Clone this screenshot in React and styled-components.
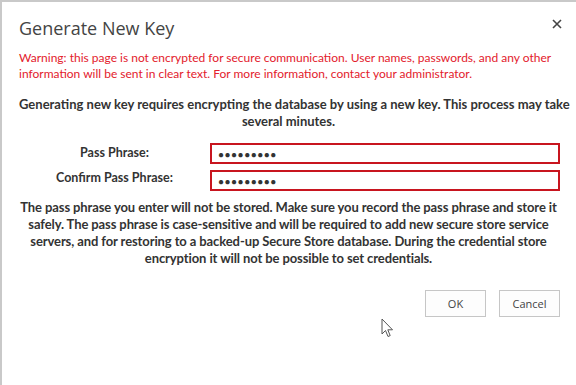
import React from "react";
import styled, { createGlobalStyle } from "styled-components";

const Global = createGlobalStyle`
  html, body { margin: 0; padding: 0; background: #fff; }
  body { font-family: "Lato", "Open Sans", sans-serif; }
`;

const Dialog = styled.div`
  position: relative;
  width: 576px;
  height: 385px;
  box-sizing: border-box;
  border-top: 2px solid #c9c9c9;
  border-left: 2px solid #c9c9c9;
  background: #fff;
  padding: 14px 18px 0 17px;
  color: #333;
`;

const Header = styled.div`
  display: flex;
  justify-content: space-between;
  align-items: flex-start;
`;

const Title = styled.h1`
  margin: 0;
  font-family: "Open Sans", sans-serif;
  font-size: 18px;
  font-weight: 400;
  color: #444;
  line-height: 24px;
`;

const Close = styled.button`
  border: 0;
  background: none;
  padding: 0;
  margin: 1px -6px 0 0;
  width: 14px;
  height: 14px;
  display: flex;
  align-items: center;
  justify-content: center;
  cursor: pointer;
`;

const Warning = styled.p`
  margin: 10px 0 0;
  font-size: 12px;
  line-height: 16px;
  color: #e3202c;
  white-space: nowrap;
`;

const Lead = styled.p`
  margin: 14px 0 0;
  font-size: 13px;
  line-height: 17px;
  font-weight: 700;
  text-align: center;
  color: #333;
  white-space: nowrap;
`;

const Form = styled.div`
  display: grid;
  grid-template-columns: 191px 1fr;
  row-gap: 6px;
  margin-top: 13px;
  margin-right: -2px;
`;

const Label = styled.label`
  font-size: 12.5px;
  font-weight: 700;
  color: #333;
  text-align: center;
  line-height: ${(p) => p.$lh || "20px"};
`;

const Input = styled.div`
  height: 21px;
  box-sizing: border-box;
  border: 2px solid #c8151f;
  display: flex;
  align-items: center;
  padding-left: 6px;
  font-family: "Open Sans", sans-serif;
  font-size: 10px;
  letter-spacing: 0.5px;
  color: #333;
`;

const Note = styled.p`
  margin: 8px 0 0;
  font-size: 13px;
  line-height: 17px;
  font-weight: 700;
  letter-spacing: -0.1px;
  text-align: center;
  color: #333;
  white-space: nowrap;
`;

const Buttons = styled.div`
  display: flex;
  justify-content: flex-end;
  gap: 13px;
  margin-top: 23px;
  margin-right: -2px;
`;

const Button = styled.button`
  width: 61px;
  height: 27px;
  border: 1px solid #c6c6c6;
  background: #fdfdfd;
  font-family: "Open Sans", sans-serif;
  font-size: 11px;
  color: #444;
  padding: 0;
`;

const Pointer = styled.svg`
  position: absolute;
  left: 379px;
  top: 316px;
`;

const dots = "●●●●●●●●●";

export default function App() {
  return (
    <>
      <Global />
      <Dialog>
        <Header>
          <Title>Generate New Key</Title>
          <Close aria-label="Close">
            <svg width="10" height="10" viewBox="0 0 10 10">
              <path d="M1 1L9 9M9 1L1 9" stroke="#444" strokeWidth="1.6" />
            </svg>
          </Close>
        </Header>
        <Warning>
          Warning: this page is not encrypted for secure communication. User names, passwords, and any other
          <br />
          information will be sent in clear text. For more information, contact your administrator.
        </Warning>
        <Lead>
          Generating new key requires encrypting the database by using a new key. This process may take
          <br />
          several minutes.
        </Lead>
        <Form>
          <Label>Pass Phrase:</Label>
          <Input>{dots}</Input>
          <Label $lh="16px">Confirm Pass Phrase:</Label>
          <Input>{dots}</Input>
        </Form>
        <Note>
          The pass phrase you enter will not be stored. Make sure you record the pass phrase and store it
          <br />
          safely. The pass phrase is case-sensitive and will be required to add new secure store service
          <br />
          servers, and for restoring to a backed-up Secure Store database. During the credential store
          <br />
          encryption it will not be possible to set credentials.
        </Note>
        <Buttons>
          <Button>OK</Button>
          <Button>Cancel</Button>
        </Buttons>
        <Pointer width="12" height="20" viewBox="0 0 12 20">
          <path
            d="M1 1 L1 16 L4.5 12.5 L7 18.5 L9.2 17.6 L6.8 11.8 L11.5 11.8 Z"
            fill="#fff"
            stroke="#555"
            strokeWidth="1"
            strokeLinejoin="round"
          />
        </Pointer>
      </Dialog>
    </>
  );
}
